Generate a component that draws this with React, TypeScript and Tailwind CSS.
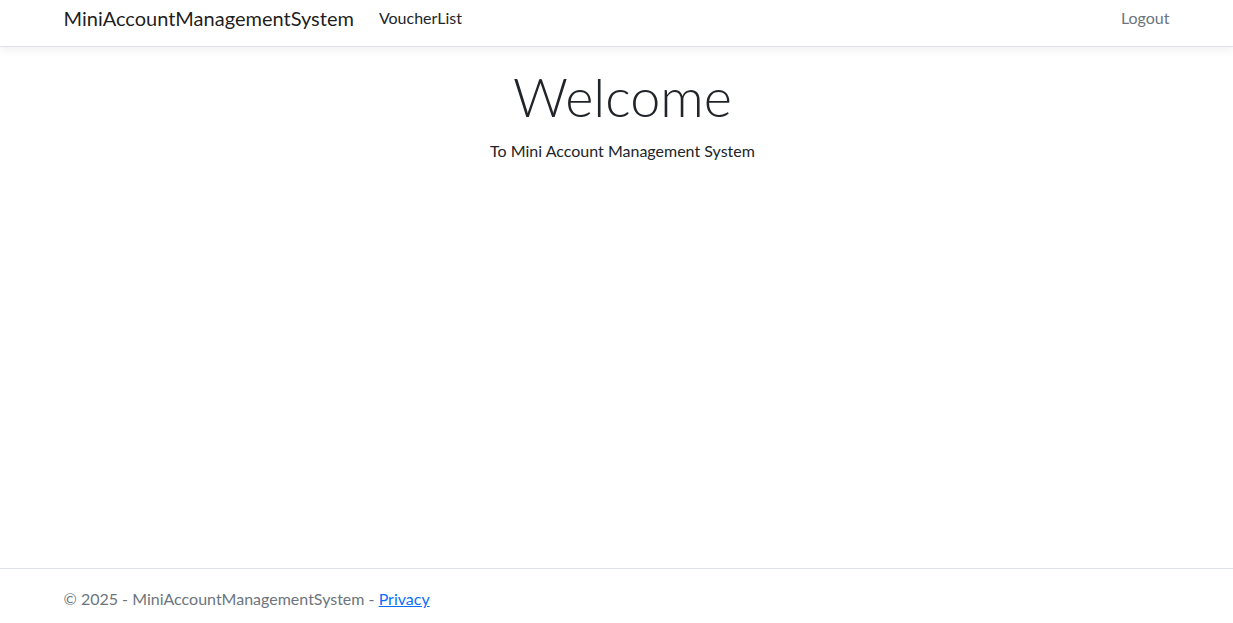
export default function App() {
  return (
    <div className="flex min-h-screen flex-col bg-white font-['Lato','Liberation_Sans',sans-serif] text-[#212529]">
      <header className="border-b border-[#dee2e6] bg-white pb-[10px] shadow-[0_4px_8px_rgba(0,0,0,0.05)]">
        <nav className="mx-auto flex h-[36px] w-[1140px] items-center px-[17px]">
          <a href="#" className="mr-[25px] text-[20px] text-black/90">
            MiniAccountManagementSystem
          </a>
          <a href="#" className="text-[16px] text-[#212529]">
            VoucherList
          </a>
          <a href="#" className="ml-auto text-[16px] text-[#6c757d]">
            Logout
          </a>
        </nav>
      </header>

      <main className="mx-auto w-[1140px] flex-1 pl-[29px] pr-[17px] pt-[18px]">
        <div className="text-center">
          <h1 className="text-[54px] font-light leading-[1.2]">Welcome</h1>
          <p className="mt-[9px] text-[16px]">To Mini Account Management System</p>
        </div>
      </main>

      <footer className="h-[55px] border-t border-[#dee2e6] text-[16px] leading-[60px] text-[#6c757d]">
        <div className="mx-auto w-[1140px] px-[17px]">
          © 2025 - MiniAccountManagementSystem -{" "}
          <a href="#" className="text-[#0d6efd] underline">
            Privacy
          </a>
        </div>
      </footer>
    </div>
  );
}
